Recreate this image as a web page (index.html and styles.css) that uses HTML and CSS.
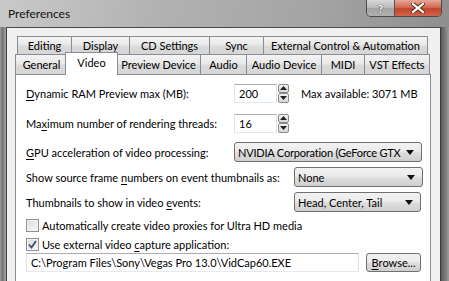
FILE: index.html
```html
<!DOCTYPE html>
<html lang="en">
<head>
    <meta charset="UTF-8">
    <title>Preferences</title>
    <link rel="stylesheet" href="styles.css">
</head>
<body>
    <div class="window">
        <div class="titlebar">
            <span class="title">Preferences</span>
            <div class="caption_buttons">
                <div class="cap_btn cap_help">?</div>
                <div class="cap_btn cap_close">
                    <svg width="14" height="10" viewBox="0 0 14 10"><path d="M2 1 L12 9 M12 1 L2 9" stroke="#5a2a20" stroke-width="4" stroke-linecap="square"/><path d="M2 1 L12 9 M12 1 L2 9" stroke="#fff" stroke-width="2.2" stroke-linecap="square"/></svg>
                </div>
            </div>
        </div>

        <div class="frame">
            <div class="frame_left"></div>

            <div class="client">
                <div class="tabs">
                    <div class="tab_row back">
                        <div class="tab t_editing">Editing</div>
                        <div class="tab t_display">Display</div>
                        <div class="tab t_cd">CD Settings</div>
                        <div class="tab t_sync">Sync</div>
                        <div class="tab t_ext">External Control &amp; Automation</div>
                    </div>
                    <div class="tab_row front">
                        <div class="tab t_general">General</div>
                        <div class="tab t_video active">Video</div>
                        <div class="tab t_preview">Preview Device</div>
                        <div class="tab t_audio">Audio</div>
                        <div class="tab t_audiodev">Audio Device</div>
                        <div class="tab t_midi">MIDI</div>
                        <div class="tab t_vst">VST Effects</div>
                    </div>
                </div>

                <div class="panel">
                    <div class="row r_spin">
                        <span class="label"><u>D</u>ynamic RAM Preview max (MB):</span>
                        <div class="spin">
                            <div class="textbox small">200</div>
                            <div class="spin_btns">
                                <div class="spin_btn"><svg width="7" height="4" viewBox="0 0 7 4"><path d="M0 4 L3.5 0 L7 4 Z" fill="#222"/></svg></div>
                                <div class="spin_btn"><svg width="7" height="4" viewBox="0 0 7 4"><path d="M0 0 L3.5 4 L7 0 Z" fill="#222"/></svg></div>
                            </div>
                        </div>
                        <span class="note">Max available: 3071 MB</span>
                    </div>

                    <div class="row r_spin2">
                        <span class="label">Ma<u>x</u>imum number of rendering threads:</span>
                        <div class="spin">
                            <div class="textbox small">16</div>
                            <div class="spin_btns">
                                <div class="spin_btn"><svg width="7" height="4" viewBox="0 0 7 4"><path d="M0 4 L3.5 0 L7 4 Z" fill="#222"/></svg></div>
                                <div class="spin_btn"><svg width="7" height="4" viewBox="0 0 7 4"><path d="M0 0 L3.5 4 L7 0 Z" fill="#222"/></svg></div>
                            </div>
                        </div>
                    </div>

                    <div class="row r_gpu">
                        <span class="label"><u>G</u>PU acceleration of video processing:</span>
                        <div class="combo wide">
                            <span class="combo_text">NVIDIA Corporation (GeForce GTX</span>
                            <svg class="arrow" width="8" height="5" viewBox="0 0 8 5"><path d="M0 0 L4 5 L8 0 Z" fill="#111"/></svg>
                        </div>
                    </div>

                    <div class="row r_combo">
                        <span class="label long">Show source frame <u>n</u>umbers on event thumbnails as:</span>
                        <div class="combo">
                            <span class="combo_text">None</span>
                            <svg class="arrow" width="8" height="5" viewBox="0 0 8 5"><path d="M0 0 L4 5 L8 0 Z" fill="#111"/></svg>
                        </div>
                    </div>

                    <div class="row r_combo">
                        <span class="label long">Thumbnails to show in video <u>e</u>vents:</span>
                        <div class="combo short">
                            <span class="combo_text">Head, Center, Tail</span>
                            <svg class="arrow" width="8" height="5" viewBox="0 0 8 5"><path d="M0 0 L4 5 L8 0 Z" fill="#111"/></svg>
                        </div>
                    </div>

                    <div class="row r_check">
                        <span class="checkbox"></span>
                        <span>Automatically create video proxies for Ultra HD media</span>
                    </div>

                    <div class="row r_check2">
                        <span class="checkbox">
                            <svg width="9" height="9" viewBox="0 0 9 9"><path d="M1 4.5 L3.5 7.5 L8 1" fill="none" stroke="#3c4c7a" stroke-width="1.8"/></svg>
                        </span>
                        <span>Use external video <u>c</u>apture application:</span>
                    </div>

                    <div class="row r_path">
                        <div class="textbox path">C:\Program Files\Sony\Vegas Pro 13.0\VidCap60.EXE</div>
                        <div class="button"><u>B</u>rowse...</div>
                    </div>
                </div>
            </div>

            <div class="frame_right"></div>
        </div>
    </div>
</body>
</html>
```

FILE: styles.css
```css
body {
    margin: 0;
    font-family: Lato, "Noto Sans", sans-serif;
    font-size: 11px;
    color: #000;
    overflow: hidden;
}

u {
    text-decoration-thickness: 1px;
    text-underline-offset: 2px;
}

.window {
    width: 449px;
    height: 281px;
    display: flex;
    flex-direction: column;
    background: linear-gradient(90deg, #b4b4b4, #a2a2a2 50%, #8c8c8c);
}

/* title bar */
.titlebar {
    flex: none;
    height: 27px;
    display: flex;
    flex-direction: row;
    align-items: flex-start;
    background: linear-gradient(100deg, #c9c9c9 0%, #b2b2b2 35%, #a4a4a4 70%, #8e8e8e 100%);
}

.title {
    margin: 6px 0 0 8px;
    font-size: 12px;
    color: #111;
}

.caption_buttons {
    margin-left: auto;
    margin-right: 7px;
    display: flex;
    flex-direction: row;
    border: 1px solid #4a4a4a;
    border-top: none;
    border-radius: 0 0 5px 5px;
    overflow: hidden;
    height: 16px;
}

.cap_btn {
    display: flex;
    justify-content: center;
    align-items: center;
}

.cap_help {
    width: 27px;
    border-right: 1px solid #555;
    background: linear-gradient(#d8d8d8, #b8b8b8 50%, #a4a4a4 51%, #b0b0b0);
    color: #fff;
    font-weight: bold;
    font-size: 12px;
    text-shadow: 0 0 1px #333, 0 0 1px #333;
}

.cap_close {
    width: 46px;
    background: linear-gradient(#e6a898, #d26a54 45%, #c2432c 55%, #d0664c);
}

/* frame */
.frame {
    flex: 1;
    min-height: 0;
    display: flex;
    flex-direction: row;
}

.frame_left {
    width: 6px;
    border-right: 1px solid #3c3c3c;
    background: linear-gradient(90deg, #9e9e9e, #707070 40%, #a8a8a8);
}

.frame_right {
    width: 8px;
    border-left: 1px solid #3c3c3c;
    background: linear-gradient(90deg, #5a5a5a, #7a7a7a 50%, #9a9a9a);
}

.client {
    flex: 1;
    background: #f0f0f0;
    border-top: 1px solid #4a4a4a;
    padding: 8px 7px 0 8px;
    overflow: hidden;
}

/* tabs */
.tabs {
    display: flex;
    flex-direction: column;
}

.tab_row {
    display: flex;
    flex-direction: row;
}

.tab_row.back {
    height: 18px;
    margin-left: 2px;
}

.tab_row.front {
    height: 20px;
    align-items: flex-end;
}

.tab {
    box-sizing: border-box;
    height: 100%;
    border: 1px solid #898c95;
    border-bottom: none;
    margin-right: -1px;
    background: linear-gradient(#f4f4f4, #e8e8e8 45%, #dadada 55%, #d6d6d6);
    display: flex;
    justify-content: center;
    align-items: center;
    white-space: nowrap;
}

.tab.active {
    position: relative;
    z-index: 1;
    height: 23px;
    margin: 0 -2px -1px -2px;
    background: #fff;
    padding-bottom: 3px;
}

.t_editing { width: 55px; }
.t_display { width: 59px; }
.t_cd { width: 81px; }
.t_sync { width: 55px; }
.t_ext { width: 165px; }

.t_general { width: 53px; }
.t_video { width: 53px; }
.t_preview { width: 85px; }
.t_audio { width: 47px; }
.t_audiodev { width: 76px; }
.t_midi { width: 44px; }
.t_vst { width: 66px; }

/* panel */
.panel {
    width: 416px;
    height: 220px;
    box-sizing: border-box;
    background: #fff;
    border: 1px solid #898c95;
    padding: 8px 0 0 10px;
    display: flex;
    flex-direction: column;
}

.row {
    display: flex;
    flex-direction: row;
    align-items: center;
    white-space: nowrap;
}

.r_spin { height: 20px; }
.r_spin2 { height: 20px; margin-top: 10px; }
.r_gpu { height: 20px; margin-top: 9px; }
.r_combo { height: 20px; margin-top: 5px; }
.r_check { height: 16px; margin-top: 5px; }
.r_check2 { height: 16px; margin-top: 3px; }
.r_path { height: 19px; margin-top: 1px; }

.label {
    width: 208px;
    flex: none;
}

.label.long {
    width: 268px;
}

.note {
    margin-left: 12px;
}

.textbox {
    box-sizing: border-box;
    height: 19px;
    border: 1px solid #abadb3;
    border-left-color: #e2e3ea;
    border-right-color: #dbdfe6;
    border-bottom-color: #e3e9ef;
    padding-left: 4px;
    display: flex;
    align-items: center;
    background: #fff;
}

.textbox.small {
    width: 43px;
}

.textbox.path {
    width: 333px;
}

.spin {
    display: flex;
    flex-direction: row;
}

.spin_btns {
    display: flex;
    flex-direction: column;
    width: 11px;
    height: 19px;
    margin-left: 1px;
}

.spin_btn {
    flex: 1;
    box-sizing: border-box;
    border: 1px solid #8a8a8a;
    border-radius: 2px;
    background: linear-gradient(#f2f2f2, #d6d6d6);
    display: flex;
    justify-content: center;
    align-items: center;
}

.combo {
    box-sizing: border-box;
    width: 129px;
    height: 20px;
    border: 1px solid #707070;
    border-radius: 3px;
    background: linear-gradient(#f2f2f2, #ebebeb 45%, #dddddd 55%, #cfcfcf);
    display: flex;
    flex-direction: row;
    align-items: center;
    padding: 0 7px 0 3px;
}

.combo.wide {
    width: 188px;
}

.combo.wide .combo_text {
    letter-spacing: -0.2px;
}

.combo.short {
    width: 127px;
}

.combo_text {
    flex: 1;
}

.checkbox {
    box-sizing: border-box;
    width: 13px;
    height: 13px;
    border: 1px solid #8e8f8f;
    background: linear-gradient(135deg, #dcdcdc, #f6f6f6);
    box-shadow: inset 0 0 0 1px #f4f4f4;
    margin-right: 3px;
    display: flex;
    justify-content: center;
    align-items: center;
}

.button {
    box-sizing: border-box;
    width: 55px;
    height: 19px;
    margin-left: 7px;
    border: 1px solid #707070;
    border-radius: 3px;
    background: linear-gradient(#f2f2f2, #ebebeb 45%, #dddddd 55%, #cfcfcf);
    display: flex;
    justify-content: center;
    align-items: center;
}
```
